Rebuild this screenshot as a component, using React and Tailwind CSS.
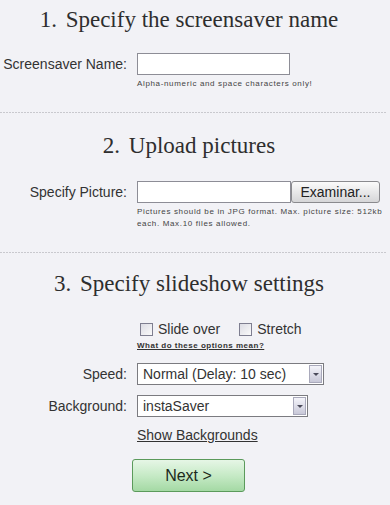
function Divider() {
  return (
    <div className="h-px w-[386px] bg-[linear-gradient(to_right,#c9c9ce_2px,transparent_2px)] bg-[length:3px_1px]" />
  );
}

function Heading({ num, children, className }) {
  return (
    <h2
      className={
        "text-center text-[23px] leading-[26px] text-[#2e2e2e] font-['Liberation_Serif','Times_New_Roman',serif] pr-3 " +
        className
      }
    >
      <span className="mr-[3px]">{num}</span> {children}
    </h2>
  );
}

function Row({ label, children, className }) {
  return (
    <div className={"flex items-center " + className}>
      <label className="w-[127px] shrink-0 text-right text-[14px] leading-[22px] text-[#333]">
        {label}
      </label>
      <div className="ml-[10px] flex">{children}</div>
    </div>
  );
}

function Select({ value, width }) {
  return (
    <div
      className={
        "flex h-[22px] items-center justify-between border border-[#7b7b80] bg-white pl-[5px] pr-[1px] " +
        width
      }
    >
      <span className="text-[14px] leading-[20px] text-[#333]">{value}</span>
      <span className="flex h-[18px] w-[13px] items-center justify-center border border-[#a9a9bb] bg-gradient-to-b from-[#f4f4fa] to-[#c8c8d8]">
        <span className="h-0 w-0 border-x-[3px] border-t-[3px] border-x-transparent border-t-[#4a4a5a]" />
      </span>
    </div>
  );
}

function Checkbox({ label }) {
  return (
    <label className="flex items-center">
      <span className="h-[13px] w-[13px] border border-[#7e7e90] bg-gradient-to-br from-[#dcdce4] to-[#fafafa]" />
      <span className="ml-[5px] text-[14px] leading-[16px] text-[#333]">{label}</span>
    </label>
  );
}

export default function App() {
  return (
    <div className="min-h-screen w-[390px] bg-[#f2f2f6] font-['Liberation_Sans',Arial,sans-serif] text-[#333]">
      <Heading num="1." className="pt-[7px]">Specify the screensaver name</Heading>

      <Row label="Screensaver Name:" className="mt-[20px]">
        <div className="h-[22px] w-[153px] border border-[#8d8d96] bg-white" />
      </Row>
      <p className="ml-[137px] mt-[3px] text-[8px] leading-[12px] tracking-[0.65px] text-[#444]">
        Alpha-numeric and space characters only!
      </p>

      <div className="mt-[22px]">
        <Divider />
      </div>

      <Heading num="2." className="mt-[20px]">Upload pictures</Heading>

      <Row label="Specify Picture:" className="mt-[22px]">
        <div className="h-[22px] w-[154px] border border-[#8d8d96] bg-white" />
        <button className="h-[22px] w-[89px] rounded-[3px] border border-[#8a8a8e] bg-gradient-to-b from-[#fbfbfb] to-[#d6d6d8] text-[14px] leading-[20px] text-[#222]">
          Examinar...
        </button>
      </Row>
      <p className="ml-[137px] mt-[3px] text-[8px] leading-[12px] tracking-[0.65px] text-[#444]">
        Pictures should be in JPG format. Max. picture size: 512kb
        <br />
        each. Max.10 files allowed.
      </p>

      <div className="mt-[22px]">
        <Divider />
      </div>

      <Heading num="3." className="mt-[18px]">Specify slideshow settings</Heading>

      <div className="ml-[140px] mt-[24px] flex gap-[19px]">
        <Checkbox label="Slide over" />
        <Checkbox label="Stretch" />
      </div>
      <a className="ml-[137px] mt-[3px] block w-fit text-[8px] font-bold leading-[12px] tracking-[0.5px] text-[#333] underline">
        What do these options mean?
      </a>

      <Row label="Speed:" className="mt-[11px]">
        <Select value="Normal (Delay: 10 sec)" width="w-[187px]" />
      </Row>
      <Row label="Background:" className="mt-[10px]">
        <Select value="instaSaver" width="w-[171px]" />
      </Row>

      <a className="ml-[137px] mt-[10px] block w-fit text-[14px] leading-[16px] text-[#333] underline">
        Show Backgrounds
      </a>

      <button className="ml-[132px] mt-[16px] h-[33px] w-[113px] rounded-[3px] border border-[#5b9a5b] bg-gradient-to-b from-[#e6f6e6] via-[#c6eac6] to-[#a4d9a4] text-[16px] text-[#1c2a1c]">
        Next &gt;
      </button>
    </div>
  );
}
